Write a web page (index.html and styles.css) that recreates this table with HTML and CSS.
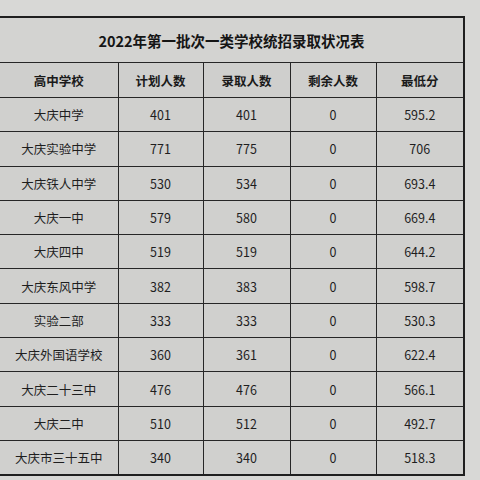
FILE: index.html
```html
<!DOCTYPE html>
<html lang="zh-CN">
<head>
<meta charset="utf-8">
<title>2022年第一批次一类学校统招录取状况表</title>
<link rel="stylesheet" href="styles.css">
</head>
<body>
<div class="sheet">
<table class="score-table">
  <colgroup>
    <col class="c-school">
    <col class="c-num">
    <col class="c-num2">
    <col class="c-num3">
    <col class="c-num4">
  </colgroup>
  <thead>
    <tr class="title-row"><th colspan="5">2022年第一批次一类学校统招录取状况表</th></tr>
    <tr class="head-row">
      <th>高中学校</th><th>计划人数</th><th>录取人数</th><th>剩余人数</th><th>最低分</th>
    </tr>
  </thead>
  <tbody>
    <tr><td>大庆中学</td><td>401</td><td>401</td><td>0</td><td>595.2</td></tr>
    <tr><td>大庆实验中学</td><td>771</td><td>775</td><td>0</td><td>706</td></tr>
    <tr><td>大庆铁人中学</td><td>530</td><td>534</td><td>0</td><td>693.4</td></tr>
    <tr><td>大庆一中</td><td>579</td><td>580</td><td>0</td><td>669.4</td></tr>
    <tr><td>大庆四中</td><td>519</td><td>519</td><td>0</td><td>644.2</td></tr>
    <tr><td>大庆东风中学</td><td>382</td><td>383</td><td>0</td><td>598.7</td></tr>
    <tr><td>实验二部</td><td>333</td><td>333</td><td>0</td><td>530.3</td></tr>
    <tr><td>大庆外国语学校</td><td>360</td><td>361</td><td>0</td><td>622.4</td></tr>
    <tr><td>大庆二十三中</td><td>476</td><td>476</td><td>0</td><td>566.1</td></tr>
    <tr><td>大庆二中</td><td>510</td><td>512</td><td>0</td><td>492.7</td></tr>
    <tr><td>大庆市三十五中</td><td>340</td><td>340</td><td>0</td><td>518.3</td></tr>
  </tbody>
</table>
</div>
</body>
</html>
```

FILE: styles.css
```css
html,
body {
  margin: 0;
  padding: 0;
  background: #d9d9d7;
}
.sheet {
  box-sizing: border-box;
  width: 480px;
  height: 480px;
  padding-top: 16px;
  background-color: #d8d8d6;
  overflow: hidden;
}
.score-table {
  margin-left: -2px;
  border-collapse: collapse;
  table-layout: fixed;
  width: 465px;
  background-color: #d0d0ce;
  font-family: "Noto Sans CJK SC", "Noto Sans", sans-serif;
  color: #1e1e1e;
  border: 2px solid #1f1f1f;
}
.c-school { width: 119px; }
.c-num { width: 85px; }
.c-num2 { width: 87px; }
.c-num3 { width: 86px; }
.c-num4 { width: 88px; }
.score-table th,
.score-table td {
  border: 1.5px solid #262626;
  text-align: center;
  padding: 0;
  white-space: nowrap;
}
.title-row th {
  height: 44px;
  font-size: 14.5px;
  font-weight: 700;
  background-color: #d3d3d1;
  color: #151515;
}
.head-row th {
  height: 34px;
  font-size: 12.5px;
  font-weight: 700;
  background-color: #cfcfcd;
  color: #1a1a1a;
}
.score-table td {
  height: 33.3px;
  font-size: 12.5px;
  font-weight: 400;
}
```
